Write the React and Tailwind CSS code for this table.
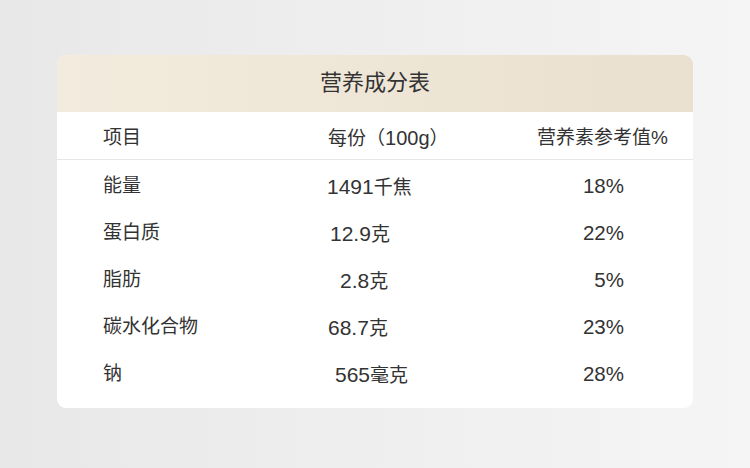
const ROWS = [
  { name: '能量', num: '1491', unit: '千焦', mid: 'ml-0', pct: '18%' },
  { name: '蛋白质', num: '12.9', unit: '克', mid: 'ml-[3px]', pct: '22%' },
  { name: '脂肪', num: '2.8', unit: '克', mid: 'ml-[13px]', pct: '5%' },
  { name: '碳水化合物', num: '68.7', unit: '克', mid: 'ml-[1px]', pct: '23%' },
  { name: '钠', num: '565', unit: '毫克', mid: 'ml-[8px]', pct: '28%' },
];

const FONT = "font-['Liberation_Sans','Noto_Sans_CJK_SC',sans-serif]";

export default function App() {
  return (
    <div
      className={`w-[750px] h-[468px] bg-gradient-to-r from-[#e8e8e8] to-[#f5f5f5] pt-[55px] pl-[57px] ${FONT}`}
    >
      <div className="w-[636px] rounded-[9px] bg-white overflow-hidden text-[#333]">
        {/* Title */}
        <div className="h-[57px] pb-[2px] flex items-center justify-center bg-gradient-to-r from-[#f3ebdd] to-[#e9e0cf] text-[22px]">
          营养成分表
        </div>

        {/* Column headers */}
        <div className="flex items-center h-[48px] pt-[5px] pl-[46px] border-b border-[#e6e6e6] text-[19px]">
          <span className="w-[224px]">项目</span>
          <span className="ml-[1px]">每份（<span className="text-[20px]">100g</span>）</span>
          <span className="ml-auto pr-[25px]">营养素参考值%</span>
        </div>

        {/* Rows */}
        <div className="pt-[3px] pb-[10px] text-[19px]">
          {ROWS.map(r => (
            <div key={r.name} className="flex items-center h-[47px] pl-[46px]">
              <span className="w-[224px]">{r.name}</span>
              <span className={r.mid}>
                <span className="text-[21px]">{r.num}</span>{r.unit}
              </span>
              <span className="ml-auto pr-[69px] text-[20.5px]">{r.pct}</span>
            </div>
          ))}
        </div>
      </div>
    </div>
  );
}
